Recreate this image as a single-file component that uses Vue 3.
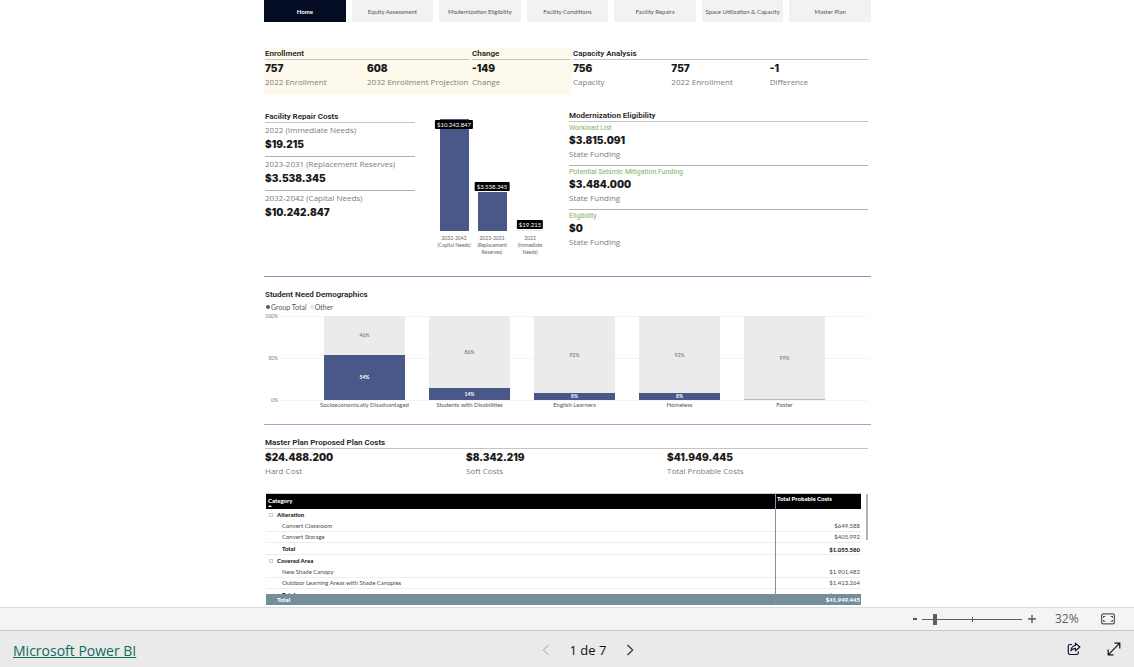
<script setup>
import { ref } from 'vue'

const pages = [
  'Home',
  'Equity Assessment',
  'Modernization Eligibility',
  'Facility Conditions',
  'Facility Repairs',
  'Space Utilization & Capacity',
  'Master Plan',
]
const zoom = ref(11)

const summary = [
  { title: 'Enrollment', key: 'enrollment', items: [['757', '2022 Enrollment'], ['608', '2032 Enrollment Projection']] },
  { title: 'Change', key: 'change', items: [['-149', 'Change']] },
  { title: 'Capacity Analysis', key: 'capacity', items: [['756', 'Capacity'], ['757', '2022 Enrollment'], ['-1', 'Difference']] },
]

const repairs = [
  ['2022 (Immediate Needs)', '$19.215'],
  ['2023-2031 (Replacement Reserves)', '$3.538.345'],
  ['2032-2042 (Capital Needs)', '$10.242.847'],
]

const repairBars = [
  { value: 10242847, text: '$10.242.847', label: '2032-2042 (Capital Needs)' },
  { value: 3538345, text: '$3.538.345', label: '2023-2031 (Replacement Reserves)' },
  { value: 19215, text: '$19.215', label: '2022 (Immediate Needs)' },
]
const maxRepair = 10242847

const eligibility = [
  ['Workload List', '$3.815.091'],
  ['Potential Seismic Mitigation Funding', '$3.484.000'],
  ['Eligibility', '$0'],
]

const demographics = [
  { label: 'Socioeconomically Disadvantaged', share: 53.6, total: '54%', other: '46%' },
  { label: 'Students with Disabilities', share: 14, total: '14%', other: '86%' },
  { label: 'English Learners', share: 8, total: '8%', other: '92%' },
  { label: 'Homeless', share: 8, total: '8%', other: '92%' },
  { label: 'Foster', share: 1, total: '', other: '99%' },
]

const planCosts = [
  ['$24.488.200', 'Hard Cost'],
  ['$8.342.219', 'Soft Costs'],
  ['$41.949.445', 'Total Probable Costs'],
]

const rows = [
  { kind: 'group', name: 'Alteration', cost: '' },
  { kind: 'item', name: 'Convert Classroom', cost: '$649.588' },
  { kind: 'item', name: 'Convert Storage', cost: '$405.992' },
  { kind: 'sum', name: 'Total', cost: '$1.055.580' },
  { kind: 'group', name: 'Covered Area', cost: '' },
  { kind: 'item', name: 'New Shade Canopy', cost: '$1.901.482' },
  { kind: 'item', name: 'Outdoor Learning Areas with Shade Canopies', cost: '$1.413.264' },
  { kind: 'sum', name: 'Total', cost: '$3.314.746' },
  { kind: 'group', name: '', cost: '' },
]
</script>

<template>
  <div class="viewer">
    <main class="report">
      <nav class="tabs">
        <button v-for="(p, i) in pages" :key="p" type="button" :class="{ active: i === 0 }">{{ p }}</button>
      </nav>

      <section class="summary">
        <div v-for="s in summary" :key="s.key" class="kpi-group" :class="s.key">
          <h2>{{ s.title }}</h2>
          <div class="kpis">
            <div v-for="k in s.items" :key="k[1]" class="kpi">
              <strong>{{ k[0] }}</strong>
              <span>{{ k[1] }}</span>
            </div>
          </div>
        </div>
      </section>

      <section class="middle">
        <div class="repairs">
          <h2>Facility Repair Costs</h2>
          <div v-for="r in repairs" :key="r[0]" class="repair">
            <span>{{ r[0] }}</span>
            <strong>{{ r[1] }}</strong>
          </div>
        </div>

        <div class="bars">
          <div v-for="b in repairBars" :key="b.text" class="bar-col">
            <div class="bar-plot">
              <div
                class="bar"
                :class="{ faint: b.value < maxRepair / 100 }"
                :style="{ height: (b.value / maxRepair) * 100 + '%' }"
              >
                <span class="pill" :class="{ inside: b.value === maxRepair }">{{ b.text }}</span>
              </div>
            </div>
            <span class="bar-label">{{ b.label }}</span>
          </div>
        </div>

        <div class="eligibility">
          <h2>Modernization Eligibility</h2>
          <div v-for="e in eligibility" :key="e[0]" class="fund">
            <em>{{ e[0] }}</em>
            <strong>{{ e[1] }}</strong>
            <span>State Funding</span>
          </div>
        </div>
      </section>

      <section class="demographics">
        <h2>Student Need Demographics</h2>
        <div class="legend">
          <i class="dot total"></i><span>Group Total</span>
          <i class="dot other"></i><span>Other</span>
        </div>
        <div class="stack-chart">
          <div class="axis"><span>100%</span><span>50%</span><span>0%</span></div>
          <div class="stack-plot">
            <div v-for="d in demographics" :key="d.label" class="stack-col">
              <div class="stack">
                <div class="rest">{{ d.other }}</div>
                <div class="share" :class="{ thin: d.share < 2 }" :style="{ height: d.share + '%' }">{{ d.total }}</div>
              </div>
              <span class="stack-label">{{ d.label }}</span>
            </div>
          </div>
        </div>
      </section>

      <section class="plan">
        <h2>Master Plan Proposed Plan Costs</h2>
        <div class="plan-kpis">
          <div v-for="p in planCosts" :key="p[1]" class="kpi">
            <strong>{{ p[0] }}</strong>
            <span>{{ p[1] }}</span>
          </div>
        </div>
        <div class="matrix">
          <div class="matrix-body">
            <table>
              <thead>
                <tr>
                  <th>Category<i class="sort"></i></th>
                  <th class="cost">Total Probable Costs</th>
                </tr>
              </thead>
              <tbody>
                <tr v-for="(r, i) in rows" :key="i" :class="r.kind">
                  <td><i v-if="r.kind === 'group'" class="toggle"></i>{{ r.name }}</td>
                  <td class="cost">{{ r.cost }}</td>
                </tr>
              </tbody>
              <tfoot>
                <tr>
                  <td>Total</td>
                  <td class="cost">$41.949.445</td>
                </tr>
              </tfoot>
            </table>
          </div>
          <div class="scrollbar"></div>
        </div>
      </section>
    </main>

    <div class="zoom-bar">
      <button type="button" aria-label="Zoom out">
        <svg width="4" height="12" viewBox="0 0 4 12"><path d="M0 6h4" stroke="#555" stroke-width="2" /></svg>
      </button>
      <div class="slider">
        <input v-model="zoom" type="range" min="0" max="100" aria-label="Zoom" />
      </div>
      <button type="button" aria-label="Zoom in">
        <svg width="8" height="12" viewBox="0 0 8 12"><path d="M0 6h8M4 2v8" stroke="#555" stroke-width="1.3" /></svg>
      </button>
      <span class="percent">32%</span>
      <button type="button" class="fit" aria-label="Fit to page">
        <svg width="14" height="12" viewBox="0 0 14 12" fill="none" stroke="#555">
          <rect x=".6" y=".9" width="12.8" height="10" rx="1.6" stroke-width="1.2" />
          <path d="M2.500 4.800V3.500h1.800M9.700 3.500h1.800v1.300M2.500 7v1.300h1.800M9.700 8.300h1.800V7" stroke-width="1.1" />
        </svg>
      </button>
    </div>

    <footer class="status">
      <a href="#">Microsoft Power BI</a>
      <div class="pager">
        <button type="button" aria-label="Previous page" disabled>
          <svg width="8" height="12" viewBox="0 0 8 12" fill="none"><path d="M6.500 1 1.300 6l5.200 5" stroke="#bdbdbd" stroke-width="1.1" /></svg>
        </button>
        <span>1 de 7</span>
        <button type="button" aria-label="Next page">
          <svg width="8" height="12" viewBox="0 0 8 12" fill="none"><path d="m1.500 1 5.200 5-5.200 5" stroke="#333" stroke-width="1.2" /></svg>
        </button>
      </div>
      <div class="actions">
        <button type="button" aria-label="Share">
          <svg width="14" height="14" viewBox="0 0 14 14" fill="none" stroke="#1d1030" stroke-width="1.2">
            <path d="M5 2.500H3A1.700 1.700 0 0 0 1.300 4.200v6.600A1.700 1.700 0 0 0 3 12.500h6.600a1.700 1.700 0 0 0 1.700-1.700V9.500" />
            <path d="M8.400 1.200v2.300C5.500 3.800 4.200 5.700 4 8.700c1.100-1.600 2.500-2.300 4.400-2.300v2.300L12.900 5z" stroke-linejoin="round" />
          </svg>
        </button>
        <button type="button" aria-label="Full screen">
          <svg width="14" height="14" viewBox="0 0 14 14" fill="none" stroke="#111" stroke-width="1.2">
            <path d="M1.200 12.800 12.800 1.200M7.500 1.200h5.300v5.300M1.200 7.500v5.300h5.300" />
          </svg>
        </button>
      </div>
    </footer>
  </div>
</template>

<style>
body {
  margin: 0;
}
</style>

<style scoped>
.viewer {
  display: flex;
  flex-direction: column;
  min-height: 100vh;
  background: #fff;
  font-family: 'Open Sans', 'Noto Sans', sans-serif;
  color: #252423;
}
button {
  margin: 0;
  padding: 0;
  border: 0;
  background: none;
  font-family: inherit;
}
svg {
  display: block;
}
.report {
  flex: 1;
  padding: 0 263px 0 264px;
}
.tabs {
  display: grid;
  grid-template-columns: repeat(7, minmax(0, 1fr));
  gap: 6px;
}
.tabs button {
  height: 22px;
  padding-top: 1px;
  background: #f2f2f2;
  color: #555;
  font-family: Lato, sans-serif;
  font-size: 6px;
  white-space: nowrap;
}
.tabs .active {
  background: #050d24;
  color: #fff;
  font-weight: 700;
}
h2 {
  margin: 0;
  height: 11px;
  border-bottom: 1px solid #c4c4c4;
  font-family: Roboto, sans-serif;
  font-size: 8px;
  font-weight: 600;
  line-height: 11px;
  color: #252423;
  white-space: nowrap;
}
strong {
  display: block;
  font-family: Inter, sans-serif;
  font-size: 10px;
  font-weight: 900;
  line-height: 16px;
  color: #1c1b1a;
}
.kpi span,
.repair span,
.fund span {
  display: block;
  font-size: 8px;
  line-height: 12px;
  color: #7d7b79;
  white-space: nowrap;
}
.summary {
  display: grid;
  grid-template-columns: 207fr 101fr 299fr;
  margin-top: 26px;
}
.kpi-group {
  padding: 0 2px 7px 1px;
}
.enrollment,
.change {
  background: #fdf9ed;
}
.capacity {
  padding-right: 3px;
}
.kpis {
  display: grid;
  grid-auto-flow: column;
  grid-auto-columns: minmax(0, 1fr);
}
.middle {
  display: grid;
  grid-template-columns: 151fr 154fr 302fr;
  margin-top: 16px;
  height: 165px;
  border-bottom: 1px solid #8e93b5;
}
.repairs {
  padding-left: 1px;
}
.repair {
  height: 33px;
  border-bottom: 1px solid #b0b0b0;
}
.repair:last-child {
  border-bottom: 0;
}
.repair span {
  line-height: 14px;
}
.repair strong {
  line-height: 15px;
}
.bars {
  display: grid;
  grid-template-columns: repeat(3, 38px);
  justify-content: center;
  padding-top: 8px;
}
.bar-col {
  display: flex;
  flex-direction: column;
  align-items: center;
}
.bar-plot {
  display: flex;
  align-items: flex-end;
  height: 112px;
}
.bar {
  position: relative;
  width: 29px;
  background: #4a5889;
}
.bar.faint {
  min-height: 1px;
  background: #e4e6ef;
}
.pill {
  position: absolute;
  left: 50%;
  bottom: 100%;
  margin-bottom: 1px;
  padding: 0 2px;
  transform: translateX(-50%);
  border-radius: 1px;
  background: #000;
  color: #fff;
  font-family: Lato, sans-serif;
  font-size: 6px;
  line-height: 9px;
}
.pill.inside {
  top: 1px;
  bottom: auto;
}
.bar-label {
  margin-top: 4px;
  width: 36px;
  font-family: Lato, sans-serif;
  font-size: 5px;
  line-height: 7px;
  text-align: center;
  color: #666;
}
.eligibility {
  padding-right: 3px;
}
.eligibility h2 {
  height: 10px;
  line-height: 10px;
}
.fund {
  height: 43px;
  border-bottom: 1px solid #b0b0b0;
}
.fund:last-child {
  border-bottom: 0;
}
.fund strong {
  line-height: 13px;
}
.fund em {
  display: block;
  font-family: Roboto, sans-serif;
  font-size: 7px;
  font-style: normal;
  line-height: 12px;
  color: #7fb069;
}
.fund span {
  line-height: 14px;
}
.demographics {
  padding: 12px 3px 0 1px;
}
.demographics h2 {
  border-bottom: 0;
}
.legend {
  display: flex;
  align-items: center;
  height: 14px;
  font-family: Lato, sans-serif;
  font-size: 7px;
  color: #555;
}
.dot {
  width: 4px;
  height: 4px;
  margin: 0 1px;
  border-radius: 50%;
  background: #4a5889;
}
.dot.other {
  margin-left: 3px;
  background: #e6e6e6;
}
.stack-chart {
  display: flex;
  gap: 3px;
  margin-top: 2px;
}
.axis {
  display: flex;
  flex-direction: column;
  justify-content: space-between;
  width: 13px;
  height: 92px;
  margin-top: -4px;
  text-align: right;
  font-family: Lato, sans-serif;
  font-size: 5px;
  line-height: 8px;
  color: #777;
}
.stack-plot {
  flex: 1;
  display: grid;
  grid-template-columns: repeat(5, minmax(0, 1fr));
  height: 108px;
  padding: 0 31px;
  background: repeating-linear-gradient(#f4f4f4 0 1px, transparent 1px 42px);
  background-size: 100% 85px;
  background-repeat: no-repeat;
}
.stack-col {
  display: flex;
  flex-direction: column;
  align-items: center;
}
.stack {
  display: flex;
  flex-direction: column;
  width: 78%;
  height: 84px;
  font-family: Lato, sans-serif;
  font-size: 5px;
}
.rest {
  flex: 1;
  display: grid;
  place-items: center;
  background: #ebebeb;
  color: #666;
}
.share {
  display: grid;
  place-items: center;
  background: #4a5889;
  color: #fff;
  font-weight: 700;
  line-height: 5px;
}
.share.thin {
  background: #b4b8d0;
}
.stack-label {
  font-family: Lato, sans-serif;
  font-size: 6px;
  line-height: 10px;
  color: #555;
  white-space: nowrap;
}
.plan {
  border-top: 1px solid #a3a6c8;
  padding: 12px 3px 2px 1px;
}
.plan-kpis {
  display: grid;
  grid-template-columns: repeat(3, minmax(0, 1fr));
}
.matrix {
  display: flex;
  gap: 5px;
  margin-top: 16px;
  padding-left: 1px;
}
.matrix-body {
  flex: 1;
  height: 112px;
  overflow: hidden;
}
.scrollbar {
  width: 2px;
  height: 46px;
  margin-top: 1px;
  background: #b3b3b3;
}
table {
  width: 100%;
  border-collapse: separate;
  border-spacing: 0;
  font-family: Lato, sans-serif;
  font-size: 6px;
  line-height: 9px;
}
th,
td {
  padding: 0 2px;
  height: 11px;
  box-sizing: border-box;
  text-align: left;
  white-space: nowrap;
}
thead th {
  position: sticky;
  top: 0;
  height: 16px;
  padding-top: 2px;
  border-top: 1px solid #ccc;
  background: #000;
  color: #fff;
  font-weight: 900;
  vertical-align: top;
}
.sort {
  display: block;
  width: 0;
  border: 2px solid transparent;
  border-top: 0;
  border-bottom-color: #fff;
}
.cost {
  width: 86px;
  padding: 0 1px;
  border-left: 1px solid #8a919e;
}
td.cost {
  text-align: right;
}
tbody td {
  padding-bottom: 1px;
  box-shadow: inset 0 -1px #eee;
}
.item td:first-child,
.sum td:first-child {
  padding-left: 16px;
}
.item td {
  color: #4c4a48;
  vertical-align: top;
}
.sum td,
.group td {
  height: 12px;
  font-weight: 900;
}
.group td {
  box-shadow: none;
}
.toggle {
  display: inline-block;
  box-sizing: border-box;
  width: 4px;
  height: 4px;
  margin: 0 4px 0 1px;
  border: 1px solid #ccc;
}
tfoot td {
  position: sticky;
  bottom: 0;
  background: #758e9b;
  color: #fff;
  font-weight: 900;
}
tfoot td:first-child {
  padding-left: 11px;
}
.zoom-bar {
  display: flex;
  align-items: center;
  justify-content: flex-end;
  height: 22px;
  padding-right: 19px;
  border-top: 1px solid #dcdcdc;
  border-bottom: 1px solid #c8c8c8;
  background: #f4f4f4;
}
.slider {
  width: 100px;
  height: 12px;
  margin: 0 6px 0 5px;
  background:
    linear-gradient(#605e5c, #605e5c) 50px 4px / 1px 5px no-repeat,
    linear-gradient(#605e5c, #605e5c) 0 6px / 100% 1px no-repeat;
}
.slider input {
  display: block;
  width: 100%;
  height: 12px;
  margin: 0;
  appearance: none;
  background: none;
}
.slider input::-webkit-slider-thumb {
  appearance: none;
  width: 4px;
  height: 11px;
  background: #605e5c;
}
.percent {
  width: 25px;
  margin: 0 21px 0 19px;
  font-size: 12px;
  line-height: 16px;
  color: #605e5c;
}
.status {
  display: grid;
  grid-template-columns: 1fr auto 1fr;
  align-items: center;
  height: 36px;
  padding: 0 13px;
  background: #eaeaea;
}
.status a {
  padding-top: 4px;
  font-size: 14px;
  line-height: 20px;
  color: #0f6b5c;
}
.pager {
  display: flex;
  align-items: center;
  gap: 20px;
  padding-top: 2px;
  margin-right: -42px;
  font-size: 13px;
  color: #111;
}
.actions {
  display: flex;
  justify-content: flex-end;
  gap: 26px;
}
</style>
